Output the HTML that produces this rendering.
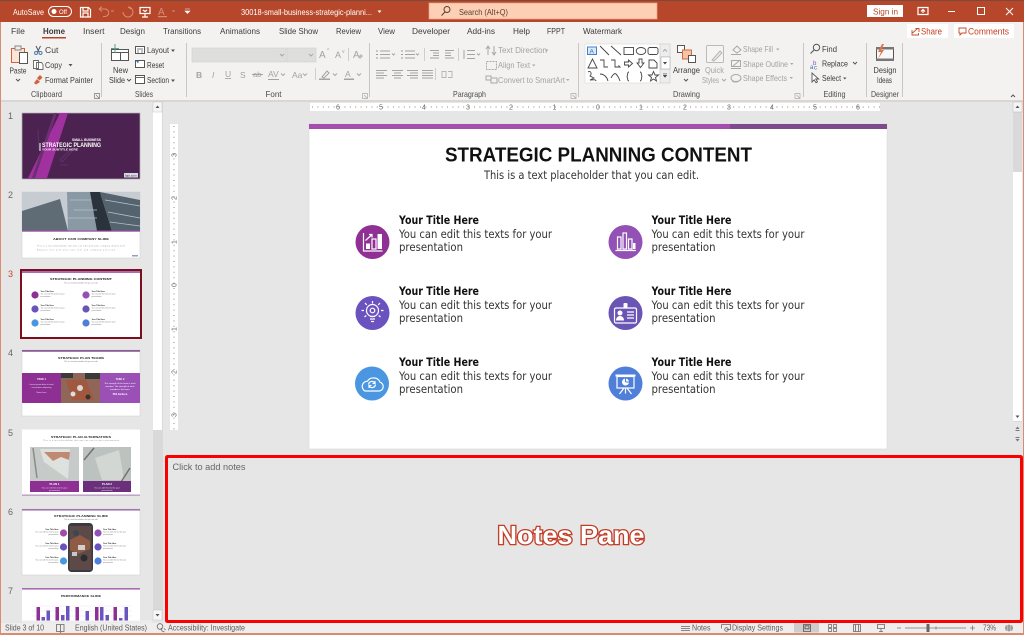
<!DOCTYPE html>
<html lang="en">
<head>
<meta charset="utf-8">
<title>PowerPoint Notes Pane</title>
<style>
html,body{margin:0;padding:0;width:1024px;height:635px;overflow:hidden;background:#e6e6e6}
svg{display:block;position:absolute;left:0;top:0;filter:blur(.35px)}
text{font-family:"Liberation Sans",sans-serif}
.t{font-size:8.6px;fill:#3c3c3c}
.g{font-size:8.4px;fill:#4c4c4c}
.d{font-size:8.4px;fill:#a3a3a3}
.s{font-size:8px;fill:#5c5c5c}
.w{font-size:8.6px;fill:#fff}
.st{font-family:"DejaVu Sans",sans-serif;font-size:11.5px;fill:#333}
.sb{font-family:"DejaVu Sans",sans-serif;font-size:11.5px;font-weight:bold;fill:#111}
.ru{font-size:7px;fill:#666;text-anchor:middle}
.i{fill:none;stroke:#555;stroke-width:1}
.id{fill:none;stroke:#a8a8a8;stroke-width:1}
.sh{fill:none;stroke:#444;stroke-width:.9}
.wi{fill:none;stroke:#fff;stroke-width:1.2}
.tt{font-size:3px;font-weight:bold;fill:#222;text-anchor:middle}
.tx{font-size:1.8px;fill:#777}
.txb{font-size:1.9px;font-weight:bold;fill:#222}
</style>
</head>
<body>
<svg width="1024" height="635" viewBox="0 0 1024 635" xmlns="http://www.w3.org/2000/svg">
<rect width="1024" height="635" fill="#e6e6e6"/>
<!-- title bar -->
<rect width="1024" height="22" fill="#b7472a"/>
<rect width="1024" height="1" fill="#7c4a3c"/>
<text x="13" y="15" class="w" textLength="31" lengthAdjust="spacingAndGlyphs">AutoSave</text>
<rect x="48.500" y="6.500" width="23" height="10" rx="5" fill="none" stroke="#fff"/>
<circle cx="54" cy="11.500" r="2.500" fill="#fff"/>
<text x="59" y="14" font-size="6" fill="#fff">Off</text>
<path d="M80.500 7.500h8l2 2v7.500h-10zM83 7.500v3.500h5v-3.500M83 17v-4h5v4" class="wi" stroke-width="1"/>
<path d="M99 9l3-2.500M99 9l3 2.500M99 9h6a3.500 3.500 0 0 1 0 7.500h-2" fill="none" stroke="#d68d78"/>
<path d="M111 11h3" stroke="#d68d78"/>
<path d="M123 12a5 5 0 1 0 5-5M128 7l3 2" fill="none" stroke="#d68d78"/>
<path d="M140 7.500h10v6h-10zM145 13.500v3.500M142 17h6M143 10l2 1.500 2-1.500" class="wi" stroke-width=".9"/>
<text x="158" y="15" font-size="10" fill="#d68d78">A</text>
<rect x="158" y="16" width="9" height="1.200" fill="#d68d78"/>
<path d="M172 11h3" stroke="#d68d78"/>
<path d="M185 9h5M185 11l2.500 2.500 2.500-2.500z" fill="#fff" stroke="#fff" stroke-width=".6"/>
<text x="241" y="15" class="w" textLength="131" lengthAdjust="spacingAndGlyphs">30018-small-business-strategic-planni...</text>
<path d="M377.500 10.500h4l-2 2.500z" fill="#fff"/>
<rect x="429" y="3" width="228" height="16" fill="#fdd0b5" stroke="#e9a582" stroke-width=".7"/>
<circle cx="447" cy="9.500" r="3" fill="none" stroke="#5a4030"/>
<path d="M445 12l-3.500 3.500" stroke="#5a4030" stroke-width="1.100"/>
<text x="459" y="15" font-size="8.600" fill="#5a4030" textLength="49" lengthAdjust="spacingAndGlyphs">Search (Alt+Q)</text>
<rect x="867" y="5" width="36" height="12" fill="#fff"/>
<text x="873" y="14.500" font-size="8.600" fill="#b7472a" textLength="25" lengthAdjust="spacingAndGlyphs">Sign in</text>
<path d="M918 7.500h10v7h-10zM923 13v-3.500M921 11.500l2-2 2 2" class="wi" stroke-width="1"/>
<path d="M948 11.500h7" stroke="#fff"/>
<rect x="977.500" y="7.500" width="7" height="7" fill="none" stroke="#fff"/>
<path d="M1006 8l7 7M1013 8l-7 7" stroke="#fff"/>
<!-- ribbon -->
<rect y="22" width="1024" height="78" fill="#f3f2f1"/>
<rect y="100" width="1024" height="2" fill="#d9d7d5"/>
<text x="11" y="34" class="t">File</text>
<text x="43" y="34" class="t" font-weight="bold" fill="#333" textLength="22" lengthAdjust="spacingAndGlyphs">Home</text>
<rect x="42" y="37" width="24" height="1.500" fill="#b7472a"/>
<text x="83" y="34" class="t">Insert</text>
<text x="120" y="34" class="t" textLength="25" lengthAdjust="spacingAndGlyphs">Design</text>
<text x="163" y="34" class="t" textLength="38" lengthAdjust="spacingAndGlyphs">Transitions</text>
<text x="220" y="34" class="t" textLength="40" lengthAdjust="spacingAndGlyphs">Animations</text>
<text x="279" y="34" class="t" textLength="39" lengthAdjust="spacingAndGlyphs">Slide Show</text>
<text x="336" y="34" class="t" textLength="25" lengthAdjust="spacingAndGlyphs">Review</text>
<text x="378" y="34" class="t" textLength="17" lengthAdjust="spacingAndGlyphs">View</text>
<text x="412" y="34" class="t" textLength="38" lengthAdjust="spacingAndGlyphs">Developer</text>
<text x="467" y="34" class="t" textLength="28" lengthAdjust="spacingAndGlyphs">Add-ins</text>
<text x="513" y="34" class="t" textLength="17" lengthAdjust="spacingAndGlyphs">Help</text>
<text x="547" y="34" class="t" textLength="18" lengthAdjust="spacingAndGlyphs">FPPT</text>
<text x="583" y="34" class="t" textLength="39" lengthAdjust="spacingAndGlyphs">Watermark</text>
<rect x="907" y="24" width="41" height="14" fill="#fff"/>
<path d="M912 30v5h6.500v-2M915.500 28.500l3.500 0 0 3.500M912.500 33l5-4.500" fill="none" stroke="#c8492a" stroke-width=".9"/>
<text x="921" y="34.500" font-size="8.800" fill="#c43e1c" textLength="21" lengthAdjust="spacingAndGlyphs">Share</text>
<rect x="954" y="24" width="60" height="14" fill="#fff"/>
<path d="M959 28h7v5h-4l-2 2v-2h-1z" fill="none" stroke="#c8492a" stroke-width=".9"/>
<text x="968" y="34.500" font-size="8.800" fill="#c43e1c" textLength="41" lengthAdjust="spacingAndGlyphs">Comments</text>
<!-- dividers -->
<path d="M101.500 43v54M186.500 43v54M369.500 43v54M578.500 43v54M803.500 43v54M866.500 43v54M902.500 43v54" stroke="#c9c7c5"/>
<path d="M348.500 48v13M424.500 48v13M458.500 48v13M315.500 68v12M435.500 68v12" stroke="#d0cecc"/>
<!-- clipboard -->
<rect x="11.500" y="48.500" width="13" height="14" fill="#fbe5d6" stroke="#d0623c"/>
<rect x="15" y="46" width="6" height="4" fill="#eee" stroke="#888"/>
<rect x="19.500" y="52.500" width="8" height="11" fill="#fff" stroke="#555"/>
<text x="9.500" y="73.500" class="t" textLength="17" lengthAdjust="spacingAndGlyphs">Paste</text>
<path d="M16 79l2 2 2-2" class="i"/>
<path d="M36 46l3 6M40.500 46l-3 6" stroke="#555"/>
<circle cx="36" cy="53" r="1.500" fill="none" stroke="#4a7fb5"/><circle cx="40.500" cy="53" r="1.500" fill="none" stroke="#4a7fb5"/>
<text x="45" y="53" class="t">Cut</text>
<path d="M33.500 60.500h5v8h-5zM36.500 62.500h5l1.500 2v5h-6.500z" fill="#fff" stroke="#666" stroke-width=".9"/>
<text x="45" y="68" class="t" textLength="17" lengthAdjust="spacingAndGlyphs">Copy</text>
<path d="M68.500 64h4l-2 2.500z" fill="#555"/>
<path d="M34 83l3-4 3 3-4 2.500zM37 78l3-3 2.500 2.500-3 3z" fill="#d0623c"/>
<text x="45" y="83" class="t" textLength="48" lengthAdjust="spacingAndGlyphs">Format Painter</text>
<text x="31" y="97" class="g" textLength="31" lengthAdjust="spacingAndGlyphs">Clipboard</text>
<path d="M94.500 93.500h5v5h-5zM96 95l3 3" fill="none" stroke="#777" stroke-width=".7"/>
<!-- slides -->
<rect x="111.500" y="49.500" width="17" height="11" fill="#fff" stroke="#555"/>
<path d="M111.500 52.500h17M120.500 52.500v8" stroke="#555"/>
<path d="M115 44v9M111 48.500h8" stroke="#5c9e8a"/>
<text x="113" y="73" class="t" textLength="15" lengthAdjust="spacingAndGlyphs">New</text>
<text x="109" y="83" class="t" textLength="16" lengthAdjust="spacingAndGlyphs">Slide</text>
<path d="M127 79l2 2 2-2" class="i"/>
<rect x="135.500" y="46.500" width="9" height="7" fill="#fff" stroke="#555"/><path d="M137 49h6M138 50v3M142 50v3" stroke="#555" stroke-width=".7"/>
<text x="147" y="53" class="t" textLength="22" lengthAdjust="spacingAndGlyphs">Layout</text>
<path d="M171 49.500h4l-2 2.500z" fill="#555"/>
<rect x="135.500" y="60.500" width="9" height="7" fill="#fff" stroke="#555"/><path d="M136 61l3 0-1 2.500z" fill="#3f84c8"/>
<text x="147" y="68" class="t" textLength="17" lengthAdjust="spacingAndGlyphs">Reset</text>
<rect x="135.500" y="75.500" width="9" height="8" fill="#fff" stroke="#555"/><path d="M135 77.500h10" stroke="#666"/>
<text x="147" y="83" class="t" textLength="22" lengthAdjust="spacingAndGlyphs">Section</text>
<path d="M171 79.500h4l-2 2.500z" fill="#555"/>
<text x="135" y="97" class="g" textLength="18" lengthAdjust="spacingAndGlyphs">Slides</text>
<!-- font -->
<rect x="192" y="48" width="94" height="14" fill="#dededd" stroke="#cfcfcf" stroke-width=".6"/>
<rect x="287" y="48" width="29" height="14" fill="#dededd" stroke="#cfcfcf" stroke-width=".6"/>
<path d="M280 54l2 2 2-2M309 54l2 2 2-2" class="id"/>
<text x="319" y="58" font-size="10" fill="#a3a3a3">A</text><text x="327" y="52" font-size="5" fill="#a3a3a3">^</text>
<text x="335" y="58" font-size="9" fill="#a3a3a3">A</text><text x="342" y="53" font-size="5" fill="#a3a3a3">v</text>
<text x="353" y="58" font-size="10" fill="#a3a3a3">A</text><path d="M358 57l3-3 2 2-3 3z" fill="#c9b3c6"/>
<text x="196" y="78" font-size="8.500" font-weight="bold" fill="#a3a3a3">B</text>
<text x="212" y="78" font-size="8.500" font-style="italic" fill="#a3a3a3" font-family="Liberation Serif">I</text>
<text x="225" y="77" font-size="8.500" fill="#a3a3a3" text-decoration="underline">U</text>
<text x="240" y="78" font-size="8.500" fill="#a3a3a3">S</text>
<text x="253" y="77" font-size="7.500" fill="#a3a3a3">ab</text><path d="M252 74.500h11" stroke="#a3a3a3"/>
<text x="268" y="77" font-size="8.500" fill="#a3a3a3">AV</text><path d="M268 79.500h11" stroke="#a3a3a3"/><path d="M281 73.500l2 2 2-2" class="id"/>
<text x="292" y="78" font-size="8.500" fill="#a3a3a3">Aa</text><path d="M303 73.500l2 2 2-2" class="id"/>
<path d="M322 77l5-6 2 2-5 5z" fill="none" stroke="#a3a3a3"/><rect x="319" y="78.500" width="11" height="1.500" fill="#a3a3a3"/>
<path d="M333 73.500l2 2 2-2" class="id"/>
<text x="345" y="77" font-size="8.500" fill="#a3a3a3">A</text><rect x="344" y="78.500" width="10" height="1.500" fill="#a3a3a3"/>
<path d="M357 73.500l2 2 2-2" class="id"/>
<text x="265.500" y="97" class="g" textLength="16" lengthAdjust="spacingAndGlyphs">Font</text>
<path d="M362.500 93.500h5v5h-5zM364 95l3 3" fill="none" stroke="#aaa" stroke-width=".7"/>
<!-- paragraph -->
<path d="M380 51h10M380 54.500h10M380 58h10M402 51h0" stroke="#a3a3a3"/>
<path d="M376 51h2M376 54.500h2M376 58h2M401 51h2M401 54.500h2M401 58h2" stroke="#999"/>
<path d="M392 53.500l1.500 1.500 1.500-1.500M416 53.500l1.500 1.500 1.500-1.500" class="id"/>
<path d="M405 51h10M405 54.500h10M405 58h10" stroke="#a3a3a3"/>
<path d="M430 50.500h9M433 53h6M433 55.500h6M430 58h9M445 50.500h9M445 53h6M445 55.500h6M445 58h9" stroke="#a3a3a3"/>
<path d="M464 50v9M467 50.500h8M467 54.500h8M467 58.500h8" stroke="#a3a3a3"/>
<path d="M477 53.500l1.500 1.500 1.500-1.500" class="id"/>
<path d="M376 70.500h11M376 73h8M376 75.500h11M376 78h8M392 70.500h11M394 73h7M392 75.500h11M394 78h7M407 70.500h11M410 73h8M407 75.500h11M410 78h8M422 70.500h11M422 73h11M422 75.500h11M422 78h11" stroke="#a3a3a3" stroke-width=".9"/>
<path d="M442 71.500h4v6h-4zM448 71.500h4v6h-4" stroke="#b5b5b5" fill="none" stroke-width=".9"/>
<path d="M488 46v9M486 49l2-3 2 3M494 46v9M492 52l2 3 2-3" class="id"/>
<text x="498" y="53" class="d" textLength="49" lengthAdjust="spacingAndGlyphs">Text Direction</text>
<path d="M545 49.500h3.500l-1.700 2z" fill="#aaa"/>
<rect x="486.500" y="61.500" width="10" height="8" class="id" stroke-dasharray="2 1"/>
<text x="498" y="68" class="d" textLength="32" lengthAdjust="spacingAndGlyphs">Align Text</text>
<path d="M532 64.500h3.500l-1.700 2z" fill="#aaa"/>
<rect x="486" y="76" width="5" height="4" fill="none" stroke="#a8a8a8"/><rect x="491" y="78" width="6" height="5" fill="none" stroke="#a8a8a8"/>
<text x="498" y="83" class="d" textLength="67" lengthAdjust="spacingAndGlyphs">Convert to SmartArt</text>
<path d="M566 79h3.500l-1.700 2z" fill="#aaa"/>
<text x="453" y="97" class="g" textLength="33" lengthAdjust="spacingAndGlyphs">Paragraph</text>
<path d="M571 93.500h5v5h-5zM572.500 95l3 3" fill="none" stroke="#aaa" stroke-width=".7"/>
<!-- shapes gallery -->
<rect x="585" y="44" width="75" height="39" fill="#fff" stroke="#d8d8d8" stroke-width=".6"/>
<rect x="660" y="44" width="10" height="39" fill="#ededed" stroke="#c9c9c9" stroke-width=".6"/>
<path d="M660 57h10M660 69h10" stroke="#c9c9c9" stroke-width=".7"/>
<rect x="661" y="57" width="9" height="12" fill="#fff" stroke="#aaa" stroke-width=".6"/>
<path d="M663 51.500l2-2 2 2" stroke="#aaa" fill="none"/>
<path d="M663 62h4l-2 2.500z" fill="#444"/>
<path d="M663 73.500h4M663 75h4l-2 2.500z" fill="#444" stroke="#444" stroke-width=".4"/>
<rect x="587.500" y="47" width="9" height="7.500" fill="#dce9f6" stroke="#3f84c8"/>
<text x="589.500" y="53.500" font-size="6.500" fill="#2f6eb3">A</text>
<path d="M600 46l9 9M611 46l10 9" class="sh"/>
<rect x="624" y="47.500" width="9.500" height="7" class="sh"/>
<ellipse cx="641" cy="51" rx="4.800" ry="3.500" class="sh"/>
<rect x="648" y="47.500" width="10" height="7" rx="2" class="sh"/>
<path d="M588 68l4.500-9 4.500 9zM600 60h4v7h4M611 60h4v7h5l-1.500-1.500M628.500 60v2h-4v3h4v2l4-3.500zM639 59h3v4h2l-3.500 4.500-3.500-4.500h2zM649 60h5l3 3v5h-8z" class="sh"/>
<path d="M588 72c3-2 4 2 2 4l4 2-4 2c2 0 6-1 6 1M600 74c4 0 7 3 8 7M611 78c2-4 4-5 5-4s3 4 4 7" class="sh"/>
<path d="M629 72c-2 0-1 3-2 4.500 1 1.500 0 4.500 2 4.500M640 72c2 0 1 3 2 4.500-1 1.500 0 4.500-2 4.500" class="sh"/>
<path d="M653.500 71.500l1.500 3.500h3.500l-3 2.500 1 3.500-3-2-3 2 1-3.500-3-2.500h3.500z" class="sh"/>
<!-- arrange -->
<rect x="677.500" y="45.500" width="7" height="7" fill="#fff" stroke="#555"/>
<rect x="682.500" y="50" width="9" height="9" fill="#f6c3a5" stroke="#cf6a42"/>
<rect x="688.500" y="55.500" width="7" height="7" fill="#fff" stroke="#555"/>
<text x="673" y="73" class="t" textLength="27" lengthAdjust="spacingAndGlyphs">Arrange</text>
<path d="M684 79l2 2 2-2" class="i"/>
<rect x="706.500" y="45.500" width="17" height="17" rx="1" fill="#f5f4f3" stroke="#bbb"/>
<path d="M712 60l8-9 2 2-8 8z" fill="#e5e5e5" stroke="#aaa" stroke-width=".8"/>
<text x="705" y="73" class="d" textLength="19" lengthAdjust="spacingAndGlyphs">Quick</text>
<text x="702" y="83" class="d" textLength="17" lengthAdjust="spacingAndGlyphs">Styles</text>
<path d="M722 79l2 2 2-2" class="id"/>
<path d="M733 50l4-4 4 4-4 3zM731 54.500h10" fill="none" stroke="#a8a8a8"/>
<text x="743" y="52" class="d" textLength="30" lengthAdjust="spacingAndGlyphs">Shape Fill</text>
<path d="M776 48.500h3.500l-1.700 2z" fill="#aaa"/>
<rect x="731.500" y="60.500" width="9" height="6" class="id"/><path d="M733 66l6-5M731 68.500h10" stroke="#a8a8a8"/>
<text x="743" y="67" class="d" textLength="45" lengthAdjust="spacingAndGlyphs">Shape Outline</text>
<path d="M790 63h3.500l-1.700 2z" fill="#aaa"/>
<ellipse cx="736" cy="78" rx="5" ry="3.500" class="id"/><path d="M732 81c3 2 7 1 9-2" stroke="#a8a8a8" fill="none"/>
<text x="743" y="81" class="d" textLength="44" lengthAdjust="spacingAndGlyphs">Shape Effects</text>
<path d="M789.500 77h3.500l-1.700 2z" fill="#aaa"/>
<text x="673" y="97" class="g" textLength="27" lengthAdjust="spacingAndGlyphs">Drawing</text>
<path d="M795 93.500h5v5h-5zM796.500 95l3 3" fill="none" stroke="#aaa" stroke-width=".7"/>
<!-- editing -->
<circle cx="816.500" cy="47.500" r="3.200" fill="none" stroke="#555"/><path d="M814 50l-3.500 3.500" stroke="#555" stroke-width="1.100"/>
<text x="822" y="52" class="t" textLength="15" lengthAdjust="spacingAndGlyphs">Find</text>
<text x="813" y="65" font-size="6" fill="#8a4fbf">b</text>
<text x="810" y="69" font-size="6" fill="#2f6eb3">a</text><text x="814" y="69.500" font-size="6" fill="#2f6eb3">c</text>
<text x="822" y="66.500" class="t" textLength="26" lengthAdjust="spacingAndGlyphs">Replace</text>
<path d="M853 62l2 2 2-2" class="i"/>
<path d="M812 73v9l2.200-2.200 1.800 3 1.500-.9-1.800-2.900h3z" fill="#fff" stroke="#555" stroke-width=".9"/>
<text x="822" y="81" class="t" textLength="19" lengthAdjust="spacingAndGlyphs">Select</text>
<path d="M843 77.500h3.500l-1.700 2z" fill="#555"/>
<text x="823.500" y="97" class="g" textLength="22" lengthAdjust="spacingAndGlyphs">Editing</text>
<!-- designer -->
<rect x="876.500" y="47.500" width="17" height="13" fill="#f8f8f8" stroke="#555"/>
<rect x="876" y="47" width="18" height="2.500" fill="#777"/>
<rect x="876" y="58.500" width="18" height="2.500" fill="#777"/>
<path d="M882 44l-4 8h3l-3 7 6-9h-3l3-6z" fill="#e0724a"/>
<text x="873.500" y="73" class="t" textLength="23" lengthAdjust="spacingAndGlyphs">Design</text>
<text x="877" y="83" class="t" textLength="15" lengthAdjust="spacingAndGlyphs">Ideas</text>
<text x="871" y="97" class="g" textLength="28" lengthAdjust="spacingAndGlyphs">Designer</text>
<path d="M1011 97l2-2 2 2" class="i"/>

<!-- left thumbs pane -->
<rect x="0" y="102" width="165" height="520" fill="#e6e6e6"/>
<text x="8" y="119" font-size="9" fill="#666">1</text>
<text x="8" y="198" font-size="9" fill="#666">2</text>
<text x="8" y="277" font-size="9" fill="#c8492a">3</text>
<text x="8" y="356" font-size="9" fill="#666">4</text>
<text x="8" y="436" font-size="9" fill="#666">5</text>
<text x="8" y="515" font-size="9" fill="#666">6</text>
<text x="8" y="594" font-size="9" fill="#666">7</text>
<!-- thumbs scrollbar -->
<rect x="153" y="102" width="10" height="518" fill="#d9d9d9"/>
<rect x="153" y="112" width="9" height="318" fill="#fff"/>
<rect x="153" y="102" width="9" height="10" fill="#f6f6f6" stroke="#c4c4c4" stroke-width=".5"/>
<path d="M155.500 108h4l-2-2.500z" fill="#555"/>
<rect x="153" y="610" width="9" height="10" fill="#f6f6f6" stroke="#c4c4c4" stroke-width=".5"/>
<path d="M155.500 614h4l-2 2.500z" fill="#555"/>
<!-- thumb 1 -->
<rect x="22" y="113" width="118" height="66" fill="#4b2250" stroke="#b5aeb6" stroke-width=".7"/>
<path d="M60 113h8l-21 65h-19z" fill="#a0319f"/>
<path d="M54 113h3l-22 65h-3z" fill="#6c2d72"/>
<path d="M60 160l10-10 2 1-10 11zM38 130l1 20M60 165h8" stroke="#5e3364" fill="none"/>
<text x="72" y="141" font-size="3.200" font-weight="bold" fill="#fff" textLength="29" lengthAdjust="spacingAndGlyphs">SMALL BUSINESS</text>
<rect x="39.500" y="143" width="1" height="8" fill="#fff"/>
<text x="42" y="147" font-size="6" font-weight="bold" fill="#fff" textLength="59" lengthAdjust="spacingAndGlyphs">STRATEGIC PLANNING</text>
<text x="42" y="150.500" font-size="2.600" font-weight="bold" fill="#fff" textLength="36" lengthAdjust="spacingAndGlyphs">YOUR SUBTITLE HERE</text>
<rect x="124" y="173" width="14" height="4.500" fill="#d8d8e0"/>
<text x="125" y="176.700" font-size="3" fill="#334">fppt.com</text>
<!-- thumb 2 -->
<rect x="22" y="192" width="118" height="66" fill="#fff" stroke="#d4d4d4" stroke-width=".6"/>
<rect x="22" y="192" width="118" height="39" fill="#c6ccd1"/>
<path d="M22 211l38-12 8 32h-46z" fill="#5f6c76"/>
<path d="M67 192h23l7 39h-29z" fill="#8a9aa5"/>
<path d="M90 192h10l12 39h-15z" fill="#2a333b"/>
<path d="M100 192l40 8v31h-28z" fill="#55636e"/>
<path d="M74 210h23M68 218h29M70 200h21M105 200l35 6M108 212l32 6M110 222l30 4" stroke="#b2c0c9" stroke-width=".8" fill="none"/>
<rect x="22" y="230.500" width="118" height="1.200" fill="#9b4fa8"/>
<text x="81" y="240" class="tt" font-size="3.300" textLength="56" lengthAdjust="spacingAndGlyphs">ABOUT OUR COMPANY SLIDE</text>
<text x="37" y="246.500" class="tx" textLength="88" lengthAdjust="spacing">This is a text placeholder that you can edit with your company details here</text>
<text x="37" y="250.500" class="tx" textLength="78" lengthAdjust="spacing">Replace this with your own text and company overview</text>
<rect x="132" y="255" width="6" height="1.500" fill="#8fa0c0"/>
<!-- thumb 3 -->
<rect x="21" y="270" width="120" height="68" fill="#fff" stroke="#7b0f1d" stroke-width="2"/>
<rect x="22" y="271" width="118" height="2" fill="#a86bb4"/>
<text x="81" y="280" class="tt" font-size="3.500" textLength="62" lengthAdjust="spacingAndGlyphs">STRATEGIC PLANNING CONTENT</text>
<text x="81" y="283.500" class="tx" text-anchor="middle" fill="#555" font-size="2.300">This is a text placeholder that you can edit.</text>
<circle cx="35" cy="295" r="3.600" fill="#8f3095"/><circle cx="86" cy="295" r="3.600" fill="#9350b5"/>
<circle cx="35" cy="309" r="3.600" fill="#6a52bf"/><circle cx="86" cy="309" r="3.600" fill="#6a55b5"/>
<circle cx="35" cy="323" r="3.600" fill="#4a96e0"/><circle cx="86" cy="323" r="3.600" fill="#4f7fd9"/>
<g>
<text x="40.500" y="292" class="txb">Your Title Here</text><text x="40.500" y="294.500" class="tx">You can edit this texts for your</text><text x="40.500" y="297" class="tx">presentation</text>
<text x="91.500" y="292" class="txb">Your Title Here</text><text x="91.500" y="294.500" class="tx">You can edit this texts for your</text><text x="91.500" y="297" class="tx">presentation</text>
<text x="40.500" y="306" class="txb">Your Title Here</text><text x="40.500" y="308.500" class="tx">You can edit this texts for your</text><text x="40.500" y="311" class="tx">presentation</text>
<text x="91.500" y="306" class="txb">Your Title Here</text><text x="91.500" y="308.500" class="tx">You can edit this texts for your</text><text x="91.500" y="311" class="tx">presentation</text>
<text x="40.500" y="320" class="txb">Your Title Here</text><text x="40.500" y="322.500" class="tx">You can edit this texts for your</text><text x="40.500" y="325" class="tx">presentation</text>
<text x="91.500" y="320" class="txb">Your Title Here</text><text x="91.500" y="322.500" class="tx">You can edit this texts for your</text><text x="91.500" y="325" class="tx">presentation</text>
</g>
<!-- thumb 4 -->
<rect x="22" y="350" width="118" height="66" fill="#fff" stroke="#d4d4d4" stroke-width=".6"/>
<rect x="22" y="350" width="118" height="1.800" fill="#8a5f96"/>
<text x="81" y="359" class="tt" textLength="46" font-size="3.300" lengthAdjust="spacingAndGlyphs">STRATEGIC PLAN TEAMS</text>
<text x="81" y="362" class="tx" text-anchor="middle" font-size="2.300">This is a text placeholder that you can edit.</text>
<rect x="22" y="373" width="39" height="30" fill="#8e2f94"/>
<rect x="61" y="373" width="39" height="30" fill="#8f6658"/>
<path d="M66 380h20l8 20h-22z" fill="#a0593f"/><path d="M61 373h12v5h-12zM85 373h15v6h-15z" fill="#3a3a3a"/>
<circle cx="80" cy="388" r="3" fill="#d8d8d8"/><circle cx="88" cy="397" r="2.500" fill="#333"/><circle cx="73" cy="394" r="2.500" fill="#ddd"/>
<rect x="100" y="373" width="40" height="30" fill="#9a50b5"/>
<text x="41.500" y="380" font-size="2.500" font-weight="bold" fill="#fff" text-anchor="middle">TASK 1</text>
<text x="41.500" y="385" font-size="2" fill="#f0dff2" text-anchor="middle">Lorem ipsum dolor sit amet</text>
<text x="41.500" y="388" font-size="2" fill="#f0dff2" text-anchor="middle">consectetur adipiscing</text>
<text x="41.500" y="393" font-size="2" fill="#f0dff2" text-anchor="middle">Name here</text>
<text x="120" y="380" font-size="2.500" font-weight="bold" fill="#fff" text-anchor="middle">TASK 2</text>
<text x="120" y="384" font-size="2.200" fill="#fff" text-anchor="middle">The strength of the team is each</text>
<text x="120" y="387" font-size="2.200" fill="#fff" text-anchor="middle">member. The strength of each</text>
<text x="120" y="390" font-size="2.200" fill="#fff" text-anchor="middle">member is the team.</text>
<text x="120" y="395" font-size="2.400" font-weight="bold" fill="#fff" text-anchor="middle">Phil Jackson</text>
<!-- thumb 5 -->
<rect x="22" y="429.500" width="118" height="66" fill="#fff"/>
<rect x="22" y="494.500" width="118" height="1.300" fill="#b894c0"/>
<text x="81" y="438" class="tt" font-size="3.300" textLength="60" lengthAdjust="spacingAndGlyphs">STRATEGIC PLAN ALTERNATIVES</text>
<text x="81" y="441" class="tx" text-anchor="middle" font-size="2.100" textLength="76" lengthAdjust="spacing">This is a text placeholder that you can use for your presentation</text>
<rect x="30" y="447" width="49" height="35" fill="#c6cac8"/>
<path d="M40 449h30l-2 30-24-17z" fill="#dfe1df"/>
<path d="M44 452h26l-1 8-8-3-8 4z" fill="#c08a72"/>
<path d="M33 448l4 30" stroke="#8b8d8a" stroke-width="1.500"/>
<rect x="83" y="447" width="48" height="35" fill="#bcc2c0"/>
<path d="M95 458l24-8 5 30h-22z" fill="#d3d7d4"/>
<path d="M84 460l10-12M121 482l9-14" stroke="#77706e" stroke-width="1.500"/>
<rect x="30" y="481" width="49" height="11" fill="#8e2f94"/>
<rect x="83" y="481" width="48" height="11" fill="#6b2f7b"/>
<text x="54.500" y="485" font-size="2.800" font-weight="bold" fill="#fff" text-anchor="middle">PLAN 1</text>
<text x="54.500" y="488.500" font-size="2" fill="#f0dff2" text-anchor="middle">You can edit this text for your</text>
<text x="54.500" y="491" font-size="2" fill="#f0dff2" text-anchor="middle">presentation</text>
<text x="107" y="485" font-size="2.800" font-weight="bold" fill="#fff" text-anchor="middle">PLAN 2</text>
<text x="107" y="488.500" font-size="2" fill="#f0dff2" text-anchor="middle">You can edit this text for your</text>
<text x="107" y="491" font-size="2" fill="#f0dff2" text-anchor="middle">presentation</text>
<!-- thumb 6 -->
<rect x="22" y="509" width="118" height="66" fill="#fff" stroke="#d4d4d4" stroke-width=".6"/>
<rect x="22" y="509" width="118" height="1.600" fill="#a277ad"/>
<text x="81" y="517" class="tt" font-size="3.300" textLength="54" lengthAdjust="spacingAndGlyphs">STRATEGIC PLANNING SLIDE</text>
<text x="81" y="520" class="tx" text-anchor="middle" font-size="2.300">This is a text placeholder that you can edit.</text>
<rect x="68" y="523" width="25" height="49" rx="3.500" fill="#3a3a40"/>
<rect x="69.500" y="526" width="22" height="44" fill="#5d4a48"/>
<path d="M70 540l10-5 10 6v8l-12 5-8-4z" fill="#8f5b45"/><circle cx="76" cy="533" r="3" fill="#3b4650"/><rect x="78" y="545" width="7" height="5" fill="#d0d0d0"/><circle cx="84" cy="558" r="3.500" fill="#2d2d30"/><rect x="72" y="552" width="5" height="4" fill="#c2c7d0"/>
<circle cx="63.500" cy="533" r="3.600" fill="#a04ca8"/><circle cx="63.500" cy="547" r="3.600" fill="#6a52bf"/><circle cx="63.500" cy="561" r="3.600" fill="#4a96e0"/>
<circle cx="98" cy="533" r="3.600" fill="#9350b5"/><circle cx="98" cy="547" r="3.600" fill="#6a52bf"/><circle cx="98" cy="561" r="3.600" fill="#4f7fd9"/>
<g text-anchor="end">
<text x="58.500" y="530" class="txb">Your Title Here</text><text x="58.500" y="532.500" class="tx">You can edit this text for your</text><text x="58.500" y="535" class="tx">presentation</text>
<text x="58.500" y="544" class="txb">Your Title Here</text><text x="58.500" y="546.500" class="tx">You can edit this text for your</text><text x="58.500" y="549" class="tx">presentation</text>
<text x="58.500" y="558" class="txb">Your Title Here</text><text x="58.500" y="560.500" class="tx">You can edit this text for your</text><text x="58.500" y="563" class="tx">presentation</text>
</g>
<text x="103" y="530" class="txb">Your Title Here</text><text x="103" y="532.500" class="tx">You can edit this text for your</text><text x="103" y="535" class="tx">presentation</text>
<text x="103" y="544" class="txb">Your Title Here</text><text x="103" y="546.500" class="tx">You can edit this text for your</text><text x="103" y="549" class="tx">presentation</text>
<text x="103" y="558" class="txb">Your Title Here</text><text x="103" y="560.500" class="tx">You can edit this text for your</text><text x="103" y="563" class="tx">presentation</text>
<!-- thumb 7 -->
<rect x="22" y="588" width="118" height="34" fill="#fff"/>
<rect x="22" y="588" width="118" height="1.600" fill="#a86bb4"/>
<text x="81" y="597" class="tt" font-size="3.300" textLength="40" lengthAdjust="spacingAndGlyphs">PERFORMANCE SLIDE</text>
<path d="M32 606h100M32 611h100M32 616h100" stroke="#e8e8e8" stroke-width=".6"/>
<path d="M36.500 607h3.500v15h-3.500zM55.500 607h3.500v15h-3.500zM75.500 607h3.500v15h-3.500zM95 607h3.500v15h-3.500zM113.500 607h3.500v15h-3.500z" fill="#8e2f94"/>
<path d="M41.500 617h3.500v5h-3.500zM46.500 610.500h3.500v11.500h-3.500zM61 615h3.500v7h-3.500zM66 606h3.500v16h-3.500zM85.500 611h3.500v11h-3.500zM100 607h3.500v15h-3.500zM105.500 615h3.500v7h-3.500zM119 618h3.500v4h-3.500zM124.500 607h3.500v15h-3.500z" fill="#6a55c0"/>
<rect x="22" y="620.500" width="130" height="2" fill="#eeeeee"/>

<!-- rulers -->
<rect x="310" y="103" width="570" height="8" fill="#fff"/>
<line x1="312" y1="107" x2="880" y2="107" stroke="#888" stroke-width="1" stroke-dasharray="1 4.400"/>
<text x="338" y="109.500" class="ru">6</text><text x="381" y="109.500" class="ru">5</text><text x="424" y="109.500" class="ru">4</text><text x="468" y="109.500" class="ru">3</text><text x="511" y="109.500" class="ru">2</text><text x="554.500" y="109.500" class="ru">1</text><text x="598" y="109.500" class="ru">0</text><text x="641" y="109.500" class="ru">1</text><text x="685" y="109.500" class="ru">2</text><text x="729" y="109.500" class="ru">3</text><text x="772" y="109.500" class="ru">4</text><text x="815" y="109.500" class="ru">5</text><text x="858" y="109.500" class="ru">6</text>
<rect x="170" y="124" width="8" height="306" fill="#fff"/>
<line x1="174" y1="126" x2="174" y2="430" stroke="#888" stroke-width="1" stroke-dasharray="1 4.400"/>
<g class="ru"><text transform="translate(176.500 155) rotate(-90)" class="ru">3</text><text transform="translate(176.500 198) rotate(-90)" class="ru">2</text><text transform="translate(176.500 242) rotate(-90)" class="ru">1</text><text transform="translate(176.500 285) rotate(-90)" class="ru">0</text><text transform="translate(176.500 329) rotate(-90)" class="ru">1</text><text transform="translate(176.500 372) rotate(-90)" class="ru">2</text><text transform="translate(176.500 415) rotate(-90)" class="ru">3</text></g>
<!-- main right scrollbar -->
<rect x="1013" y="102" width="9" height="320" fill="#d9d9d9"/>
<rect x="1013" y="172" width="9" height="241" fill="#fff"/>
<rect x="1013" y="102" width="9" height="10" fill="#f4f4f4" stroke="#bbb" stroke-width=".5"/>
<path d="M1015.500 108h4l-2-2.500z" fill="#555"/>
<rect x="1013" y="413" width="9" height="8" fill="#fff"/>
<path d="M1015.500 415.500h4l-2 2.500z" fill="#555"/>
<path d="M1015.500 429h4l-2-2.500zM1015.500 431h4v-1h-4z" fill="#777"/>
<path d="M1015.500 437h4v1h-4zM1015.500 439h4l-2 2.500z" fill="#777"/>

<!-- slide -->
<rect x="309" y="124" width="578" height="325" fill="#fff" stroke="#d4d4d4" stroke-width=".5"/>
<rect x="309" y="124" width="578" height="5" fill="#a44fae"/>
<rect x="730" y="124" width="157" height="5" fill="#7f4a8b"/>
<text x="445" y="161.500" font-size="20" font-weight="bold" fill="#111" textLength="307" lengthAdjust="spacingAndGlyphs">STRATEGIC PLANNING CONTENT</text>
<text x="484" y="179" class="st" textLength="215" lengthAdjust="spacingAndGlyphs">This is a text placeholder that you can edit.</text>

<text x="399" y="224" class="sb" textLength="80" lengthAdjust="spacingAndGlyphs">Your Title Here</text>
<text x="399" y="238" class="st" textLength="153" lengthAdjust="spacingAndGlyphs">You can edit this texts for your</text>
<text x="399" y="251" class="st" textLength="64" lengthAdjust="spacingAndGlyphs">presentation</text>
<text x="399" y="295" class="sb" textLength="80" lengthAdjust="spacingAndGlyphs">Your Title Here</text>
<text x="399" y="309" class="st" textLength="153" lengthAdjust="spacingAndGlyphs">You can edit this texts for your</text>
<text x="399" y="322" class="st" textLength="64" lengthAdjust="spacingAndGlyphs">presentation</text>
<text x="399" y="366" class="sb" textLength="80" lengthAdjust="spacingAndGlyphs">Your Title Here</text>
<text x="399" y="380" class="st" textLength="153" lengthAdjust="spacingAndGlyphs">You can edit this texts for your</text>
<text x="399" y="393" class="st" textLength="64" lengthAdjust="spacingAndGlyphs">presentation</text>
<text x="651.500" y="224" class="sb" textLength="80" lengthAdjust="spacingAndGlyphs">Your Title Here</text>
<text x="651.500" y="238" class="st" textLength="153" lengthAdjust="spacingAndGlyphs">You can edit this texts for your</text>
<text x="651.500" y="251" class="st" textLength="64" lengthAdjust="spacingAndGlyphs">presentation</text>
<text x="651.500" y="295" class="sb" textLength="80" lengthAdjust="spacingAndGlyphs">Your Title Here</text>
<text x="651.500" y="309" class="st" textLength="153" lengthAdjust="spacingAndGlyphs">You can edit this texts for your</text>
<text x="651.500" y="322" class="st" textLength="64" lengthAdjust="spacingAndGlyphs">presentation</text>
<text x="651.500" y="366" class="sb" textLength="80" lengthAdjust="spacingAndGlyphs">Your Title Here</text>
<text x="651.500" y="380" class="st" textLength="153" lengthAdjust="spacingAndGlyphs">You can edit this texts for your</text>
<text x="651.500" y="393" class="st" textLength="64" lengthAdjust="spacingAndGlyphs">presentation</text>

<!-- icon 1 chart -->
<g transform="translate(372.500 242)">
<circle r="17" fill="#8f3095"/>
<path d="M-9-9V9H10" class="wi"/>
<rect x="-6.500" y="1.500" width="4" height="5.500" fill="#fff"/>
<rect x="-.5" y="-3" width="4" height="10" class="wi" fill="none"/>
<rect x="5" y="-8" width="4.500" height="15" fill="#fff"/>
<path d="M-7-1.500L-1-7M-3.500-7.500H-.5V-4.500" class="wi" stroke-width="1"/>
</g>
<!-- icon 2 bars -->
<g transform="translate(625.500 242)">
<circle r="17" fill="#9350b5"/>
<path d="M-10 8.500H10.500" class="wi"/>
<rect x="-8" y="-5" width="3.500" height="12" class="wi" stroke-width="1"/>
<rect x="-2.500" y="-9" width="3.500" height="16" class="wi" stroke-width="1"/>
<rect x="3" y="-3" width="3.500" height="10" class="wi" stroke-width="1"/>
<rect x="7.500" y="1" width="2.500" height="6" fill="#fff"/>
</g>
<!-- icon 3 bulb -->
<g transform="translate(372.500 313)">
<circle r="17" fill="#6a52bf"/>
<circle cy="-2.500" r="6" class="wi"/>
<circle cy="-2.500" r="2.300" class="wi" stroke-width="1"/>
<path d="M-2.500 3.500h5M-2.500 6h5M-1.500 8.500h3M0-12v2.500M-7.500-10l1.800 2M7.500-10l-1.800 2M-11-2.500h2.500M11-2.500H8.500M-8 4l1.800-1.500M8 4L6.200 2.500" class="wi" stroke-width="1"/>
</g>
<!-- icon 4 badge -->
<g transform="translate(625.500 313)">
<circle r="17" fill="#6a55b5"/>
<rect x="-11" y="-5" width="22" height="15" rx="1.500" class="wi"/>
<rect x="-2" y="-10" width="4" height="5" rx="1" fill="#fff"/>
<circle cx="-5.500" cy="0" r="2.500" fill="#fff"/>
<path d="M-9.500 7.500c0-6 8-6 8 0z" fill="#fff"/>
<path d="M1.500-1h7M1.500 2h7M1.500 5h7" class="wi" stroke-width="1"/>
</g>
<!-- icon 5 cloud -->
<g transform="translate(372 383.500)">
<circle r="17" fill="#4a96e0"/>
<path d="M-7 7.500h14a4.500 4.500 0 0 0 1-8.800 6 6 0 0 0-6-4.200 6.500 6.500 0 0 0-6.500 3.200 5.200 5.200 0 0 0-2.500 9.800z" class="wi" fill="none"/>
<path d="M-3.500 1a3.500 3.500 0 0 1 6-2M3.500 1a3.500 3.500 0 0 1-6 2" class="wi" stroke-width="1"/>
<path d="M3-2.500v2.500h-2.500M-3 4.500V2h2.500" class="wi" stroke-width=".8"/>
</g>
<!-- icon 6 board -->
<g transform="translate(625.500 383.500)">
<circle r="17" fill="#4f7fd9"/>
<rect x="-10" y="-9" width="20" height="2" fill="#fff"/>
<rect x="-8.500" y="-7" width="17" height="11.500" class="wi" fill="none"/>
<circle cy="-1.500" r="3.500" fill="#fff"/>
<path d="M0-1.500V-5M0-1.500H3.500" stroke="#4f7fd9"/>
<path d="M0 4.500V10M-1.500 4.500l-4.500 6M1.500 4.500l4.500 6" class="wi" stroke-width="1"/>
</g>

<!-- notes pane -->
<rect x="166.500" y="456.500" width="855" height="165" fill="#e6e6e6" stroke="#fa0000" stroke-width="3" rx="1"/>
<text x="172.500" y="470" font-size="8.800" fill="#666" textLength="73" lengthAdjust="spacingAndGlyphs">Click to add notes</text>
<text x="497.500" y="544" font-size="26" font-weight="bold" fill="#fff" stroke="#c23e26" stroke-width="2.600" paint-order="stroke" textLength="147" lengthAdjust="spacingAndGlyphs">Notes Pane</text>

<!-- status bar -->
<rect y="623" width="1024" height="10" fill="#efeeed"/>
<rect y="633" width="1024" height="2" fill="#d98c74"/>
<rect x="0" y="22" width="1" height="613" fill="#d98c74"/>
<rect x="1023" y="22" width="1" height="613" fill="#d98c74"/>
<text x="5" y="630.500" class="s" textLength="39" lengthAdjust="spacingAndGlyphs">Slide 3 of 10</text>
<path d="M56.500 624.500h3.500l.5 1 .5-1h3v7h-3l-.5 1-.5-1h-3.500zM60.500 625.500v6" fill="none" stroke="#666" stroke-width=".8"/>
<text x="75" y="630.500" class="s" textLength="72" lengthAdjust="spacingAndGlyphs">English (United States)</text>
<circle cx="160" cy="626.500" r="2.800" fill="none" stroke="#666" stroke-width=".8"/>
<path d="M161 628l1 3 2.500 1M164 628.500l1.500 1.500" fill="none" stroke="#666" stroke-width=".8"/>
<text x="168" y="630.500" class="s" textLength="77" lengthAdjust="spacingAndGlyphs">Accessibility: Investigate</text>
<path d="M681 626.500h9M681 628.500h9M681 630.500h9" stroke="#666" stroke-width=".7"/>
<text x="692" y="630.500" class="s" textLength="18.500" lengthAdjust="spacingAndGlyphs">Notes</text>
<path d="M721.500 624.500h9v5h-4M721.500 624.500v4" fill="none" stroke="#666" stroke-width=".8"/><circle cx="726.500" cy="629.500" r="1.800" fill="none" stroke="#666" stroke-width=".8"/>
<text x="732" y="630.500" class="s" textLength="51" lengthAdjust="spacingAndGlyphs">Display Settings</text>
<rect x="794" y="623" width="25" height="9.500" fill="#cfcdcb"/>
<path d="M803.500 624.500h7v7h-7zM805 625.800h4v3h-4z" fill="none" stroke="#555" stroke-width=".8"/>
<path d="M828.500 624.500h3v3h-3zM833.500 624.500h3v3h-3zM828.500 628.500h3v3h-3zM833.500 628.500h3v3h-3z" fill="none" stroke="#666" stroke-width=".7"/>
<path d="M853.500 624.500h7v7h-7zM855.500 624.500v7M858.500 624.500v7" fill="none" stroke="#666" stroke-width=".8"/>
<path d="M877.500 624.500h7v4h-7zM881 628.500v3M879 631.500h4" fill="none" stroke="#666" stroke-width=".8"/>
<path d="M897 628h4M905 628h61M970 628h5M972.500 625.500v5" stroke="#777" stroke-width=".8"/>
<rect x="926.500" y="624" width="3" height="8" fill="#666"/>
<path d="M936 626.500v3" stroke="#888"/>
<text x="983" y="630.500" class="s" textLength="13" lengthAdjust="spacingAndGlyphs">73%</text>
<path d="M1005 628h8M1009 624.500v7M1006 626h6v4h-6z" fill="none" stroke="#666" stroke-width=".7"/>
</svg>
</body>
</html>
